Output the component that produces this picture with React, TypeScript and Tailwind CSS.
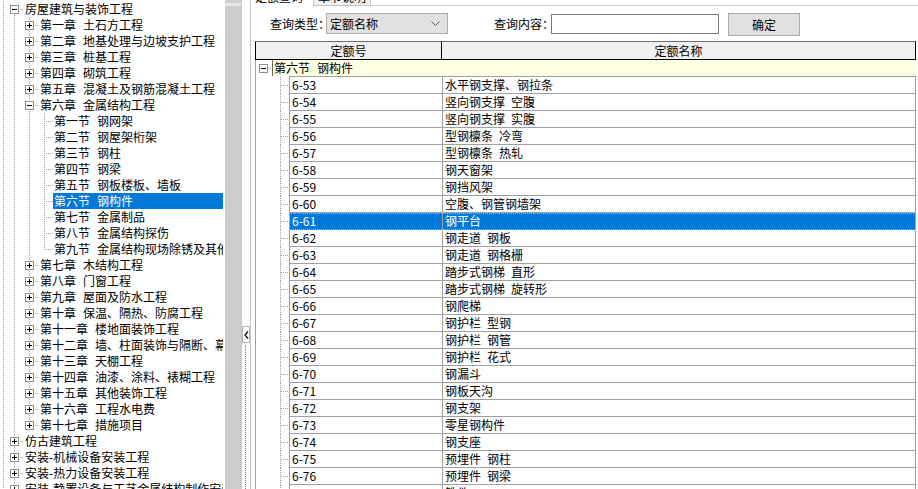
import React from 'react';

type TreeItem = [number, string, '+' | '-' | null];

const treeItems: TreeItem[] = [
  [0, '房屋建筑与装饰工程', '-'],
  [1, '第一章 土石方工程', '+'],
  [1, '第二章 地基处理与边坡支护工程', '+'],
  [1, '第三章 桩基工程', '+'],
  [1, '第四章 砌筑工程', '+'],
  [1, '第五章 混凝土及钢筋混凝土工程', '+'],
  [1, '第六章 金属结构工程', '-'],
  [2, '第一节 钢网架', null],
  [2, '第二节 钢屋架桁架', null],
  [2, '第三节 钢柱', null],
  [2, '第四节 钢梁', null],
  [2, '第五节 钢板楼板、墙板', null],
  [2, '第六节 钢构件', null],
  [2, '第七节 金属制品', null],
  [2, '第八节 金属结构探伤', null],
  [2, '第九节 金属结构现场除锈及其他', null],
  [1, '第七章 木结构工程', '+'],
  [1, '第八章 门窗工程', '+'],
  [1, '第九章 屋面及防水工程', '+'],
  [1, '第十章 保温、隔热、防腐工程', '+'],
  [1, '第十一章 楼地面装饰工程', '+'],
  [1, '第十二章 墙、柱面装饰与隔断、幕墙工程', '+'],
  [1, '第十三章 天棚工程', '+'],
  [1, '第十四章 油漆、涂料、裱糊工程', '+'],
  [1, '第十五章 其他装饰工程', '+'],
  [1, '第十六章 工程水电费', '+'],
  [1, '第十七章 措施项目', '+'],
  [0, '仿古建筑工程', '+'],
  [0, '安装-机械设备安装工程', '+'],
  [0, '安装-热力设备安装工程', '+'],
  [0, '安装-静置设备与工艺金属结构制作安装工程', '+'],
];

const SELECTED = 12;

const rows: [string, string][] = [
  ['6-53', '水平钢支撑、钢拉条'],
  ['6-54', '竖向钢支撑 空腹'],
  ['6-55', '竖向钢支撑 实腹'],
  ['6-56', '型钢檩条 冷弯'],
  ['6-57', '型钢檩条 热轧'],
  ['6-58', '钢天窗架'],
  ['6-59', '钢挡风架'],
  ['6-60', '空腹、钢管钢墙架'],
  ['6-61', '钢平台'],
  ['6-62', '钢走道 钢板'],
  ['6-63', '钢走道 钢格栅'],
  ['6-64', '踏步式钢梯 直形'],
  ['6-65', '踏步式钢梯 旋转形'],
  ['6-66', '钢爬梯'],
  ['6-67', '钢护栏 型钢'],
  ['6-68', '钢护栏 钢管'],
  ['6-69', '钢护栏 花式'],
  ['6-70', '钢漏斗'],
  ['6-71', '钢板天沟'],
  ['6-72', '钢支架'],
  ['6-73', '零星钢构件'],
  ['6-74', '钢支座'],
  ['6-75', '预埋件 钢柱'],
  ['6-76', '预埋件 钢梁'],
  ['6-77', '铁件'],
];

const SEL_ROW = 8;

// x of the guide line for each tree level, and where the label starts
const LX = [14, 29, 44];
const TX = [25, 40, 54];

function continues(i: number, k: number) {
  for (let j = i + 1; j < treeItems.length; j++) {
    const l = treeItems[j][0];
    if (l === k) return true;
    if (l < k) return false;
  }
  return k === 0;
}

function ExpandBox({ cx, cy, open }: { cx: number; cy: number; open: boolean }) {
  return (
    <g shapeRendering="crispEdges">
      <rect x={cx - 3.5} y={cy - 3.5} width={8} height={8} fill="#fff" stroke="#919191" />
      <line x1={cx - 2} y1={cy + 0.5} x2={cx + 3} y2={cy + 0.5} stroke="#000" />
      {!open && <line x1={cx + 0.5} y1={cy - 2} x2={cx + 0.5} y2={cy + 3} stroke="#000" />}
    </g>
  );
}

function TreeGuides({ i }: { i: number }) {
  const [level, , box] = treeItems[i];
  const w = TX[level] - 1;
  const x = LX[level] + 0.5;
  const dot = { stroke: '#a0a0a0', strokeDasharray: '1 1' };
  return (
    <svg width={w} height={16} className="shrink-0" shapeRendering="crispEdges">
      <line x1={3.5} y1={0} x2={3.5} y2={16} {...dot} />
      {LX.slice(0, level).map((lx, k) =>
        continues(i, k) ? <line key={k} x1={lx + 0.5} y1={0} x2={lx + 0.5} y2={16} {...dot} /> : null,
      )}
      {i > 0 && <line x1={x} y1={0} x2={x} y2={8} {...dot} />}
      {continues(i, level) && <line x1={x} y1={8} x2={x} y2={16} {...dot} />}
      <line x1={LX[level]} y1={8.5} x2={w} y2={8.5} {...dot} />
      {box && <ExpandBox cx={LX[level]} cy={8} open={box === '-'} />}
    </svg>
  );
}

function Label({ text, gap }: { text: string; gap: string }) {
  const at = text.indexOf(' ');
  if (at < 0) return <span>{text}</span>;
  return (
    <>
      <span>{text.slice(0, at)}</span>
      <span className={gap}>{text.slice(at + 1)}</span>
    </>
  );
}

function Tree() {
  return (
    <div className="w-[225px] shrink-0">
      <div className="w-[223px] overflow-hidden pt-[1px]">
        {treeItems.map((it, i) => (
          <div key={i} className="flex h-4 whitespace-nowrap">
            <TreeGuides i={i} />
            <div
              className={
                'flex flex-1 pl-[1px] leading-4 ' + (i === SELECTED ? 'bg-[#0078d7] text-white' : 'text-black')
              }
            >
              <Label text={it[1]} gap="ml-[7px]" />
            </div>
          </div>
        ))}
      </div>
    </div>
  );
}

function Splitter() {
  return (
    <div className="flex w-[10px] shrink-0 flex-col border-x border-[#c8c8c8] bg-white">
      <div className="h-[326px]" />
      <div className="flex h-[17px] items-center justify-center border border-[#b4b4b4]">
        <svg width="5" height="8" viewBox="0 0 5 8">
          <polyline points="4,0.5 1,4 4,7.5" fill="none" stroke="#000" strokeWidth="1.2" />
        </svg>
      </div>
      <div className="ml-[3px] mt-[2px] flex-1 border-l border-dotted border-[#3a8fd8]" />
    </div>
  );
}

function DataRow({ code, name, selected }: { code: string; name: string; selected: boolean }) {
  return (
    <div className="flex h-[17px]">
      <svg width={33} height={17} className="shrink-0" shapeRendering="crispEdges">
        <line x1={24.5} y1={0} x2={24.5} y2={17} stroke="#a0a0a0" strokeDasharray="1 1" />
        <line x1={25} y1={8.5} x2={33} y2={8.5} stroke="#a0a0a0" strokeDasharray="1 1" />
      </svg>
      <div
        className={
          'flex flex-1 ' +
          (selected
            ? 'bg-[#0078d7] text-white outline-1 outline-dotted outline-[#f0a050] -outline-offset-1'
            : 'border-b border-[#a0a0a0] text-black')
        }
      >
        <div className="w-[153px] shrink-0 border-l border-[#a0a0a0] pl-[2px] leading-4">{code}</div>
        <div className="flex flex-1 border-x border-[#a0a0a0] pl-[2px] leading-4">
          <Label text={name} gap="ml-[6px]" />
        </div>
      </div>
    </div>
  );
}

function Table() {
  return (
    <div className="ml-[4px] flex w-[661px] flex-1 flex-col overflow-hidden">
      <div className="flex h-[19px] border-x border-b border-t border-black border-t-[#6d6d6d] bg-[#f0f0f0]">
        <div className="w-[186px] border-r border-black text-center leading-[17px]">定额号</div>
        <div className="flex-1 text-center leading-[17px]">定额名称</div>
      </div>
      <div className="flex-1 border-l border-[#a0a0a0]">
        <div className="flex h-4">
          <svg width={16} height={16} className="shrink-0" shapeRendering="crispEdges">
            <line x1={12} y1={8.5} x2={16} y2={8.5} stroke="#a0a0a0" strokeDasharray="1 1" />
            <ExpandBox cx={7} cy={8} open />
          </svg>
          <div className="flex flex-1 border-l border-[#6b6b55] bg-[#ffffe1] pl-[1px] leading-4">
            <Label text="第六节 钢构件" gap="ml-[7px]" />
          </div>
        </div>
        <div className="flex h-px">
          <div className="w-[33px]" />
          <div className="flex-1 bg-[#a0a0a0]" />
        </div>
        {rows.map((r, i) => (
          <DataRow key={r[0]} code={r[0]} name={r[1]} selected={i === SEL_ROW} />
        ))}
      </div>
    </div>
  );
}

function RightPane() {
  return (
    <div className="flex flex-1 flex-col overflow-hidden">
      <div className="h-[6px] overflow-hidden">
        <div className="mt-[-13px] flex h-[19px] items-end">
          <div className="ml-[4px] w-[58px] pb-[1px] leading-4">定额查询</div>
          <div className="border border-[#c4c4c4] bg-[#f0f0f0] px-[4px] leading-4">章节说明</div>
          <div className="h-full flex-1 border-b border-[#d9d9d9]" />
        </div>
      </div>
      <div className="flex h-[35px] items-start pl-[19px] pt-[7px]">
        <div className="w-[56px] whitespace-nowrap leading-[21px]">查询类型：</div>
        <div className="flex h-[21px] w-[122px] items-center justify-between border border-[#adadad] bg-[#e1e1e1] pl-[3px] pr-[7px]">
          <span className="leading-4">定额名称</span>
          <svg width="9" height="5" viewBox="0 0 9 5">
            <polyline points="0.5,0.5 4.5,4.5 8.5,0.5" fill="none" stroke="#606060" strokeWidth="1" />
          </svg>
        </div>
        <div className="ml-[46px] w-[57px] whitespace-nowrap leading-[21px]">查询内容：</div>
        <div className="mt-[1px] h-[20px] w-[168px] border border-[#7a7a7a] bg-white" />
        <div className="ml-[9px] flex h-[23px] w-[72px] items-center justify-center border border-[#adadad] bg-[#e1e1e1]">
          确定
        </div>
      </div>
      <Table />
    </div>
  );
}

export default function App() {
  return (
    <div className="flex h-[489px] w-[918px] overflow-hidden bg-white text-[12px] text-black [font-family:'Noto_Sans_CJK_SC','Noto_Sans',sans-serif]">
      <Tree />
      <div className="w-[16px] shrink-0 bg-[#cdcdcd] pt-[3px]">
        <div className="h-[3px] bg-[#e6e6e6]" />
      </div>
      <Splitter />
      <RightPane />
    </div>
  );
}
